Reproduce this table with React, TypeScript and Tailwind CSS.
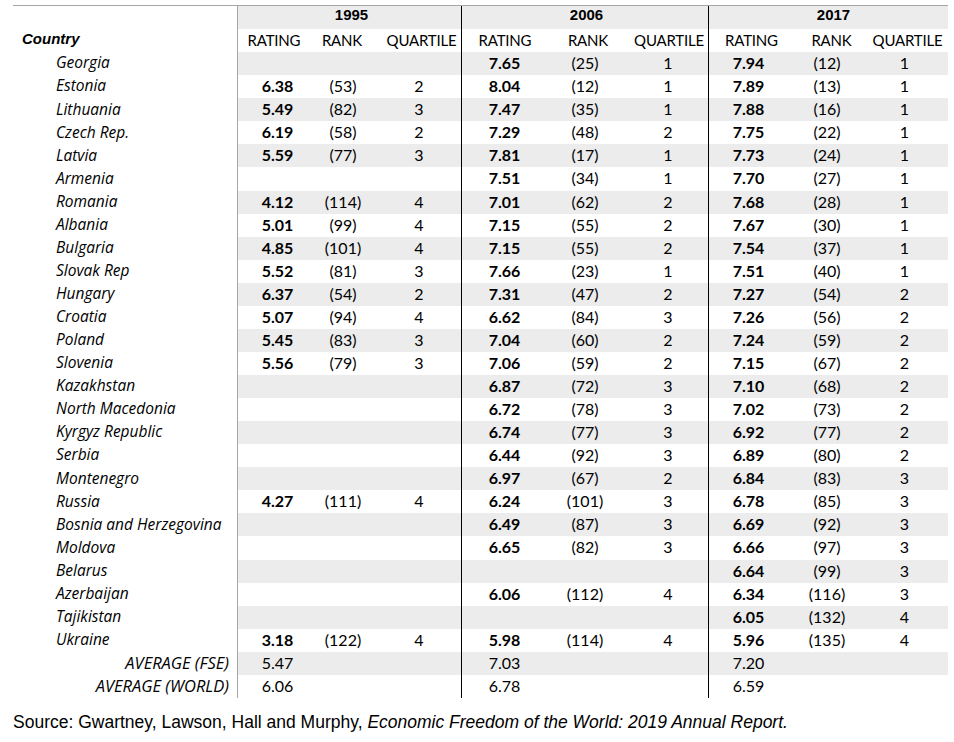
type Cell = [string, string, string] | null;
type Row = { country: string; y1995: Cell; y2006: Cell; y2017: Cell };

const rows: Row[] = [
  { country: "Georgia", y1995: null, y2006: ["7.65", "(25)", "1"], y2017: ["7.94", "(12)", "1"] },
  { country: "Estonia", y1995: ["6.38", "(53)", "2"], y2006: ["8.04", "(12)", "1"], y2017: ["7.89", "(13)", "1"] },
  { country: "Lithuania", y1995: ["5.49", "(82)", "3"], y2006: ["7.47", "(35)", "1"], y2017: ["7.88", "(16)", "1"] },
  { country: "Czech Rep.", y1995: ["6.19", "(58)", "2"], y2006: ["7.29", "(48)", "2"], y2017: ["7.75", "(22)", "1"] },
  { country: "Latvia", y1995: ["5.59", "(77)", "3"], y2006: ["7.81", "(17)", "1"], y2017: ["7.73", "(24)", "1"] },
  { country: "Armenia", y1995: null, y2006: ["7.51", "(34)", "1"], y2017: ["7.70", "(27)", "1"] },
  { country: "Romania", y1995: ["4.12", "(114)", "4"], y2006: ["7.01", "(62)", "2"], y2017: ["7.68", "(28)", "1"] },
  { country: "Albania", y1995: ["5.01", "(99)", "4"], y2006: ["7.15", "(55)", "2"], y2017: ["7.67", "(30)", "1"] },
  { country: "Bulgaria", y1995: ["4.85", "(101)", "4"], y2006: ["7.15", "(55)", "2"], y2017: ["7.54", "(37)", "1"] },
  { country: "Slovak Rep", y1995: ["5.52", "(81)", "3"], y2006: ["7.66", "(23)", "1"], y2017: ["7.51", "(40)", "1"] },
  { country: "Hungary", y1995: ["6.37", "(54)", "2"], y2006: ["7.31", "(47)", "2"], y2017: ["7.27", "(54)", "2"] },
  { country: "Croatia", y1995: ["5.07", "(94)", "4"], y2006: ["6.62", "(84)", "3"], y2017: ["7.26", "(56)", "2"] },
  { country: "Poland", y1995: ["5.45", "(83)", "3"], y2006: ["7.04", "(60)", "2"], y2017: ["7.24", "(59)", "2"] },
  { country: "Slovenia", y1995: ["5.56", "(79)", "3"], y2006: ["7.06", "(59)", "2"], y2017: ["7.15", "(67)", "2"] },
  { country: "Kazakhstan", y1995: null, y2006: ["6.87", "(72)", "3"], y2017: ["7.10", "(68)", "2"] },
  { country: "North Macedonia", y1995: null, y2006: ["6.72", "(78)", "3"], y2017: ["7.02", "(73)", "2"] },
  { country: "Kyrgyz Republic", y1995: null, y2006: ["6.74", "(77)", "3"], y2017: ["6.92", "(77)", "2"] },
  { country: "Serbia", y1995: null, y2006: ["6.44", "(92)", "3"], y2017: ["6.89", "(80)", "2"] },
  { country: "Montenegro", y1995: null, y2006: ["6.97", "(67)", "2"], y2017: ["6.84", "(83)", "3"] },
  { country: "Russia", y1995: ["4.27", "(111)", "4"], y2006: ["6.24", "(101)", "3"], y2017: ["6.78", "(85)", "3"] },
  { country: "Bosnia and Herzegovina", y1995: null, y2006: ["6.49", "(87)", "3"], y2017: ["6.69", "(92)", "3"] },
  { country: "Moldova", y1995: null, y2006: ["6.65", "(82)", "3"], y2017: ["6.66", "(97)", "3"] },
  { country: "Belarus", y1995: null, y2006: null, y2017: ["6.64", "(99)", "3"] },
  { country: "Azerbaijan", y1995: null, y2006: ["6.06", "(112)", "4"], y2017: ["6.34", "(116)", "3"] },
  { country: "Tajikistan", y1995: null, y2006: null, y2017: ["6.05", "(132)", "4"] },
  { country: "Ukraine", y1995: ["3.18", "(122)", "4"], y2006: ["5.98", "(114)", "4"], y2017: ["5.96", "(135)", "4"] },
];

const averages: [string, string, string, string][] = [
  ["AVERAGE (FSE)", "5.47", "7.03", "7.20"],
  ["AVERAGE (WORLD)", "6.06", "6.78", "6.59"],
];

const rowCls = "flex h-[23.07px]";
const cellCls = "flex h-full items-center justify-center pb-[1px]";
const calibri = "font-['Lato',sans-serif] text-[16px] leading-none";
const nameCls = "font-['Open_Sans',sans-serif] text-[15.5px] italic leading-none";
const labelCls = "text-[15px] tracking-[-0.2px]";

function Group1995({ c, bold = true, shade }: { c: Cell; bold?: boolean; shade: string }) {
  return (
    <div className={`flex w-[224px] border-l border-[#a6a6a6] ${shade}`}>
      <div className={`${cellCls} w-[79px] ${bold ? "font-bold" : ""}`}>{c?.[0]}</div>
      <div className={`${cellCls} w-[52px]`}>{c?.[1]}</div>
      <div className={`${cellCls} w-[92px] pl-[8px]`}>{c?.[2]}</div>
    </div>
  );
}

function Group2006({ c, bold = true, shade }: { c: Cell; bold?: boolean; shade: string }) {
  return (
    <div className={`flex w-[247px] border-l border-black ${shade}`}>
      <div className={`${cellCls} w-[85px] ${bold ? "font-bold" : ""}`}>{c?.[0]}</div>
      <div className={`${cellCls} w-[76px]`}>{c?.[1]}</div>
      <div className={`${cellCls} w-[85px] pl-[5px]`}>{c?.[2]}</div>
    </div>
  );
}

function Group2017({ c, bold = true, shade }: { c: Cell; bold?: boolean; shade: string }) {
  return (
    <div className={`flex w-[240px] border-l border-black ${shade}`}>
      <div className={`${cellCls} w-[79px] ${bold ? "font-bold" : ""}`}>{c?.[0]}</div>
      <div className={`${cellCls} w-[78px]`}>{c?.[1]}</div>
      <div className={`${cellCls} w-[82px] pr-[5px]`}>{c?.[2]}</div>
    </div>
  );
}

export default function App() {
  return (
    <div className="min-h-[742px] w-[954px] bg-white text-black">
      <div className="ml-[13px] mt-[5px] w-[935px] border-t border-[#a6a6a6]">
        {/* year row */}
        <div className={rowCls}>
          <div className="w-[224px]" />
          <div className="flex w-[224px] items-center justify-center border-l border-[#a6a6a6] bg-[#ececec] pb-[4px] pl-[4px] font-['Liberation_Sans',Arial,sans-serif] text-[15px] font-bold">
            1995
          </div>
          <div className="flex w-[247px] items-center justify-center border-l border-black bg-[#ececec] pb-[4px] pl-[3px] font-['Liberation_Sans',Arial,sans-serif] text-[15px] font-bold">
            2006
          </div>
          <div className="flex w-[240px] items-center justify-center border-l border-black bg-[#ececec] pb-[4px] pl-[10px] font-['Liberation_Sans',Arial,sans-serif] text-[15px] font-bold">
            2017
          </div>
        </div>

        {/* column labels */}
        <div className={`${rowCls} ${calibri}`}>
          <div className="flex w-[224px] items-center pb-[5px] pl-[9px] font-['Liberation_Sans',Arial,sans-serif] text-[15px] font-bold italic">
            Country
          </div>
          <div className="flex w-[224px] border-l border-[#a6a6a6]">
            <div className={`${cellCls} ${labelCls} w-[72px]`}>RATING</div>
            <div className={`${cellCls} ${labelCls} w-[64px]`}>RANK</div>
            <div className={`${cellCls} ${labelCls} w-[87px] pl-[8px]`}>QUARTILE</div>
          </div>
          <div className="flex w-[247px] border-l border-black">
            <div className={`${cellCls} ${labelCls} w-[86px]`}>RATING</div>
            <div className={`${cellCls} ${labelCls} w-[80px]`}>RANK</div>
            <div className={`${cellCls} ${labelCls} w-[80px] pl-[2px]`}>QUARTILE</div>
          </div>
          <div className="flex w-[240px] border-l border-black">
            <div className={`${cellCls} ${labelCls} w-[85px]`}>RATING</div>
            <div className={`${cellCls} ${labelCls} w-[75px]`}>RANK</div>
            <div className={`${cellCls} ${labelCls} w-[79px] pr-[2px]`}>QUARTILE</div>
          </div>
        </div>

        {rows.map((r, i) => {
          const shade = i % 2 === 0 ? "bg-[#ececec]" : "";
          return (
            <div key={r.country} className={`${rowCls} ${calibri}`}>
              <div className={`flex w-[224px] items-center pb-[1px] pl-[43px] ${nameCls}`}>{r.country}</div>
              <Group1995 c={r.y1995} shade={shade} />
              <Group2006 c={r.y2006} shade={shade} />
              <Group2017 c={r.y2017} shade={shade} />
            </div>
          );
        })}

        {averages.map((a, i) => {
          const shade = i === 0 ? "bg-[#ececec]" : "";
          return (
            <div key={a[0]} className={`${rowCls} ${calibri}`}>
              <div className={`flex w-[224px] items-center justify-end pb-[1px] pr-[8px] ${nameCls} text-[16.5px]`}>
                {a[0]}
              </div>
              <Group1995 c={[a[1], "", ""]} bold={false} shade={shade} />
              <Group2006 c={[a[2], "", ""]} bold={false} shade={shade} />
              <Group2017 c={[a[3], "", ""]} bold={false} shade={shade} />
            </div>
          );
        })}
      </div>

      <p className="ml-[13px] mt-[14px] font-['Liberation_Sans',Arial,sans-serif] text-[17.5px] leading-[20px]">
        Source: Gwartney, Lawson, Hall and Murphy, <i>Economic Freedom of the World: 2019 Annual Report.</i>
      </p>
    </div>
  );
}
